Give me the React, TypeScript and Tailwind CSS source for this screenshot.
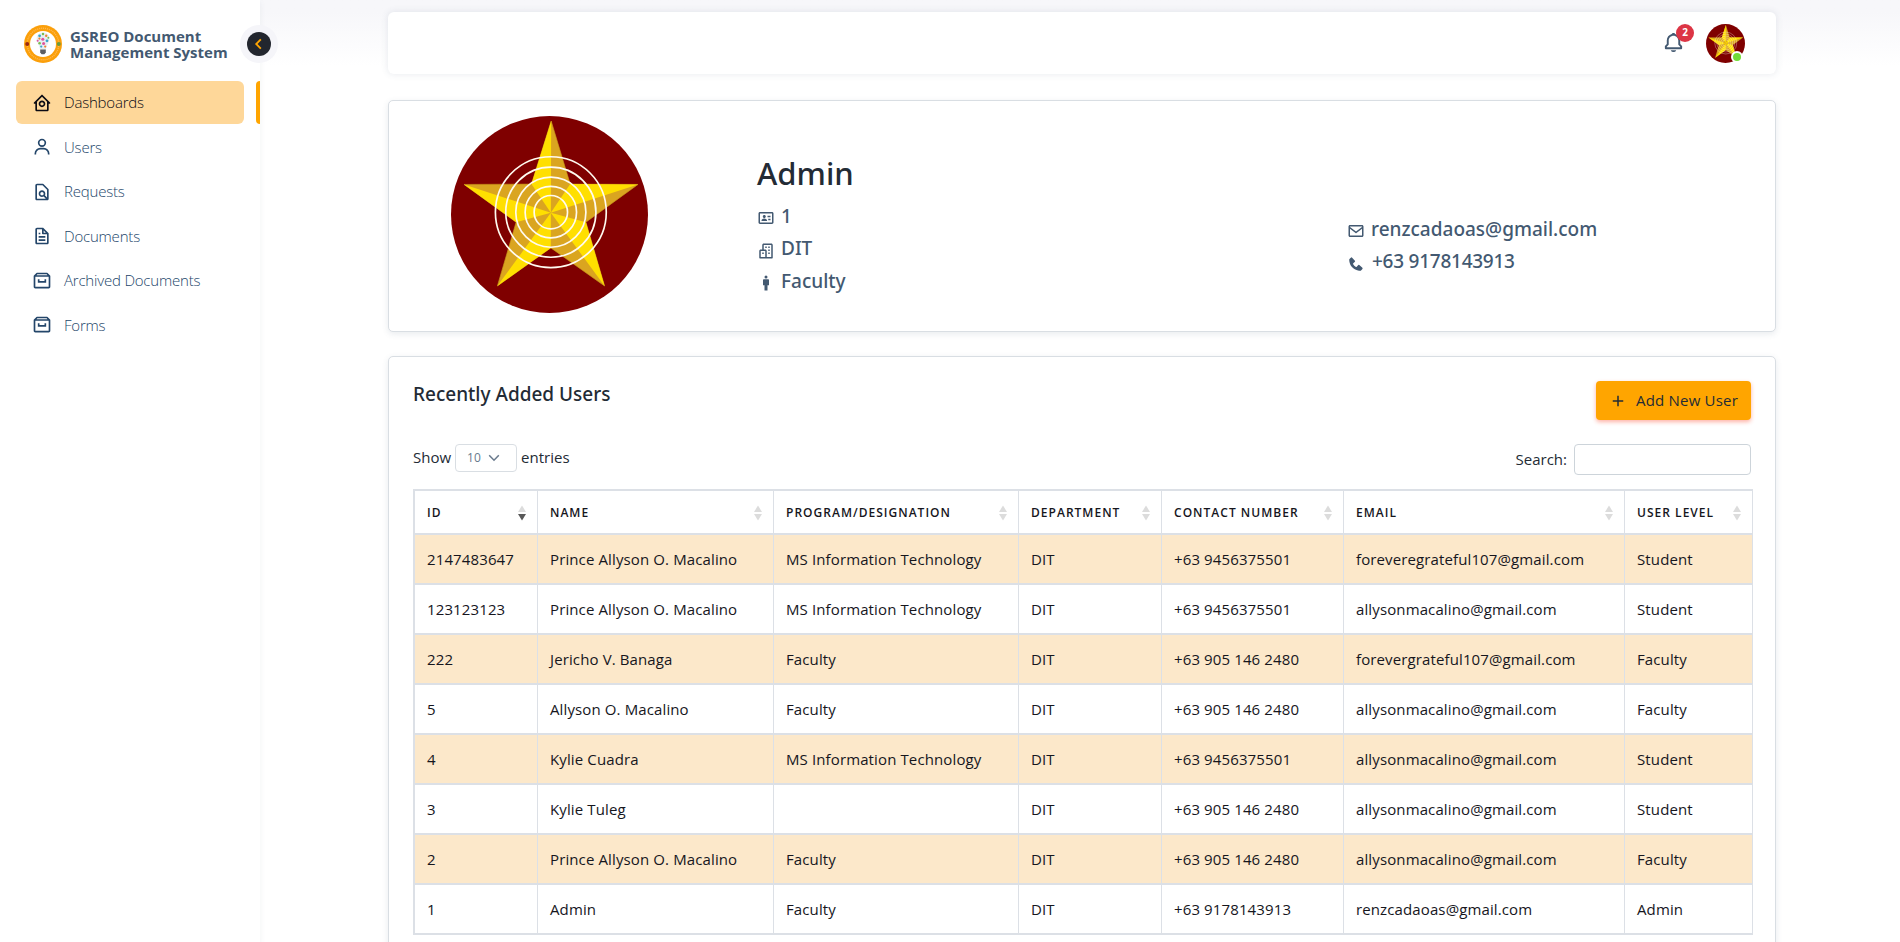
import {
  BiArchive,
  BiBell,
  BiBuildings,
  BiChevronLeft,
  BiEnvelope,
  BiFile,
  BiFileFind,
  BiHomeCircle,
  BiIdCard,
  BiMale,
  BiPlus,
  BiSolidPhone,
  BiUser,
} from 'react-icons/bi';
import type { IconType } from 'react-icons';

const menu: { label: string; icon: IconType; active?: boolean }[] = [
  { label: 'Dashboards', icon: BiHomeCircle, active: true },
  { label: 'Users', icon: BiUser },
  { label: 'Requests', icon: BiFileFind },
  { label: 'Documents', icon: BiFile },
  { label: 'Archived Documents', icon: BiArchive },
  { label: 'Forms', icon: BiArchive },
];

const columns = [
  { label: 'ID', width: 'w-[123px]' },
  { label: 'Name', width: 'w-[236px]' },
  { label: 'Program/Designation', width: 'w-[245px]' },
  { label: 'Department', width: 'w-[143px]' },
  { label: 'Contact Number', width: 'w-[182px]' },
  { label: 'Email', width: 'w-[281px]' },
  { label: 'User Level', width: 'w-[128px]' },
];

const users = [
  ['2147483647', 'Prince Allyson O. Macalino', 'MS Information Technology', 'DIT', '+63 9456375501', 'foreveregrateful107@gmail.com', 'Student'],
  ['123123123', 'Prince Allyson O. Macalino', 'MS Information Technology', 'DIT', '+63 9456375501', 'allysonmacalino@gmail.com', 'Student'],
  ['222', 'Jericho V. Banaga', 'Faculty', 'DIT', '+63 905 146 2480', 'forevergrateful107@gmail.com', 'Faculty'],
  ['5', 'Allyson O. Macalino', 'Faculty', 'DIT', '+63 905 146 2480', 'allysonmacalino@gmail.com', 'Faculty'],
  ['4', 'Kylie Cuadra', 'MS Information Technology', 'DIT', '+63 9456375501', 'allysonmacalino@gmail.com', 'Student'],
  ['3', 'Kylie Tuleg', '', 'DIT', '+63 905 146 2480', 'allysonmacalino@gmail.com', 'Student'],
  ['2', 'Prince Allyson O. Macalino', 'Faculty', 'DIT', '+63 905 146 2480', 'allysonmacalino@gmail.com', 'Faculty'],
  ['1', 'Admin', 'Faculty', 'DIT', '+63 9178143913', 'renzcadaoas@gmail.com', 'Admin'],
];

function StarEmblem({ className }: { className: string }) {
  return (
    <svg viewBox="64 48 590 590" className={className}>
      <circle cx="359" cy="343" r="295" fill="#7f0000" />
      <polygon
        points="364,63 421,252 624,253 468,366 524,557 363,443 203,557 259,366 103,253 305,252"
        fill="#daa520"
        stroke="#c9971a"
        strokeWidth="2"
      />
      <g fill="#ffdf00">
        <polygon points="363,338 305,252 364,63" />
        <polygon points="363,338 421,252 624,253" />
        <polygon points="363,338 468,366 524,557" />
        <polygon points="363,338 363,443 203,557" />
        <polygon points="363,338 259,366 103,253" />
      </g>
      <g fill="none" stroke="#fffaf0" strokeWidth="5">
        <circle cx="363" cy="336" r="50" />
        <circle cx="363" cy="336" r="77" />
        <circle cx="363" cy="336" r="105" />
        <circle cx="363" cy="336" r="135" />
        <circle cx="363" cy="336" r="166" />
      </g>
    </svg>
  );
}

function BulbLogo() {
  return (
    <svg viewBox="0 0 38 38" className="size-[38px] shrink-0">
      <circle cx="19" cy="19" r="19" fill="#fb9f0a" />
      <circle cx="19" cy="19" r="15.8" fill="none" stroke="#fdb850" strokeWidth="1.4" strokeDasharray="1.1 0.9" />
      <circle cx="19" cy="19" r="13" fill="#ffffff" />
      <circle cx="3.2" cy="19" r="2" fill="#9b2a12" />
      <circle cx="34.8" cy="19" r="2" fill="#6b9a3d" />
      <path d="M19 7.6c-4 0-6.4 2.9-6.4 6.4 0 3.4 2.8 6 3.4 10.4h6c.6-4.4 3.4-7 3.4-10.4 0-3.5-2.4-6.4-6.4-6.4z" fill="#e6eff4" />
      <g fill="#3aa6c9">
        <circle cx="15.6" cy="10.8" r="1.4" />
        <circle cx="23" cy="15.8" r="1.4" />
        <circle cx="17.2" cy="21.6" r="1.1" />
      </g>
      <g fill="#e0559b">
        <circle cx="18.8" cy="14.2" r="1.5" />
        <circle cx="19.6" cy="18.6" r="1.5" />
        <circle cx="13.6" cy="15.8" r="1" />
      </g>
      <g fill="#7bbd4a">
        <circle cx="19" cy="9" r="1.2" />
        <circle cx="15.6" cy="18.2" r="1.3" />
        <circle cx="24.4" cy="12.8" r="1" />
      </g>
      <g fill="#f08030">
        <circle cx="22.2" cy="10.8" r="1.2" />
        <circle cx="15.4" cy="13.6" r="1.1" />
        <circle cx="21.2" cy="21.6" r="1.1" />
      </g>
      <path d="M16.2 24.6h5.6v3l-1.4 1.6h-2.8l-1.4-1.6z" fill="#5c5d61" />
    </svg>
  );
}

function SortArrows({ descending }: { descending: boolean }) {
  return (
    <svg viewBox="0 0 8 16" className="h-4 w-2">
      <polygon points="4,0.5 8,7 0,7" fill="#dcdcdc" />
      <polygon points="0,9 8,9 4,15.5" fill={descending ? '#585858' : '#dcdcdc'} />
    </svg>
  );
}

function Sidebar() {
  return (
    <aside className="relative z-10 h-[942px] w-[260px] shrink-0 bg-white shadow-[0_2px_6px_rgba(67,89,113,0.08)]">
      <div className="flex h-[81px] items-start pt-[25px] pl-6">
        <BulbLogo />
        <p className="ml-2 pt-[2.5px] text-[15px] leading-4 font-bold whitespace-nowrap text-[#435971]">
          GSREO Document
          <br />
          Management System
        </p>
      </div>
      <button className="absolute top-[25px] left-60 flex size-[38px] items-center justify-center rounded-full bg-[#f5f5f9]">
        <span className="flex size-6 items-center justify-center rounded-full bg-[#22262e] text-[#ffa500]">
          <BiChevronLeft className="size-[22px]" />
        </span>
      </button>
      <nav className="flex flex-col gap-[1.5px]">
        {menu.map(({ label, icon: Icon, active }) => (
          <div key={label} className="flex h-[43px] justify-between pl-4">
            <a
              className={
                active
                  ? 'flex w-[228px] items-center rounded-md bg-[#fed799] pl-4 text-[15px] tracking-[-0.2px] text-[#0b0b14]'
                  : 'flex w-[228px] items-center rounded-md pl-4 text-[15px] tracking-[-0.2px] text-[#24466a]'
              }
            >
              <Icon className="size-5" />
              <span className="ml-3 font-light">{label}</span>
            </a>
            {active && <span className="w-1 rounded-l bg-[#ffa500]" />}
          </div>
        ))}
      </nav>
    </aside>
  );
}

function Navbar() {
  return (
    <header className="flex h-[62px] items-center justify-end rounded-md bg-white pr-[31px] shadow-[0_0_6px_1px_rgba(67,89,113,0.1)]">
      <div className="relative mr-[21px] mb-[2px] text-[#435971]">
        <BiBell className="size-[23px]" />
        <span className="absolute -top-[7px] left-[14px] flex size-[18px] items-center justify-center rounded-full bg-[#dc3545] text-[10px] font-bold text-white">
          2
        </span>
      </div>
      <div className="relative">
        <StarEmblem className="size-[39px]" />
        <span className="absolute right-[2px] bottom-0 size-3 rounded-full border-2 border-white bg-[#71dd37]" />
      </div>
    </header>
  );
}

function ProfileCard() {
  return (
    <section className="mt-[26px] flex h-[232px] rounded-[5px] border border-[#d9dee3] bg-white font-['Noto_Sans',sans-serif] font-medium text-[#435971] shadow-[0_2px_6px_rgba(67,89,113,0.12)]">
      <StarEmblem className="mt-[15px] ml-[62px] size-[197px]" />
      <div className="ml-[109px] pt-[49px]">
        <h1 className="text-[31px] leading-[46px] text-[#232b35]">Admin</h1>
        <ul className="mt-[4px] text-[19px] leading-[32.4px]">
          <li className="flex items-center gap-[6px]">
            <BiIdCard className="mt-1 size-[18px]" />1
          </li>
          <li className="flex items-center gap-[6px]">
            <BiBuildings className="mt-1 size-[18px]" />DIT
          </li>
          <li className="flex items-center gap-[6px]">
            <BiMale className="mt-1 size-[18px]" />Faculty
          </li>
        </ul>
      </div>
      <ul className="ml-auto w-[428px] pt-[112px] text-[19px] leading-[32.4px]">
        <li className="flex items-center gap-[6px]">
          <BiEnvelope className="mt-1 size-[18px]" />renzcadaoas@gmail.com
        </li>
        <li className="flex items-center gap-[7px] tracking-[-0.25px]">
          <BiSolidPhone className="mt-1 size-[18px]" />+63 9178143913
        </li>
      </ul>
    </section>
  );
}

function UsersTable() {
  return (
    <table className="mt-[13px] w-[1340px] table-fixed border-separate border-spacing-0 border-t-2 border-l-2 border-[#dce0e6] text-left text-[#16161d]">
      <thead>
        <tr className="h-11">
          {columns.map(({ label, width }, i) => (
            <th
              key={label}
              className={`${width} border-r border-b-2 border-[#dce0e6] pt-[2px] pr-[11px] pl-[12px] text-xs font-semibold tracking-[1.02px] uppercase`}
            >
              <div className="flex items-center justify-between">
                {label}
                <SortArrows descending={i === 0} />
              </div>
            </th>
          ))}
        </tr>
      </thead>
      <tbody className="text-[15px] tracking-[0.12px]">
        {users.map((row) => (
          <tr key={row[0]} className="h-[50px] odd:bg-[#fce8ca]">
            {row.map((cell, i) => (
              <td key={i} className="border-r border-b-2 border-[#dce0e6] pl-[12px] whitespace-nowrap">
                {cell}
              </td>
            ))}
          </tr>
        ))}
      </tbody>
    </table>
  );
}

function UsersCard() {
  return (
    <section className="mt-6 h-[640px] rounded-[5px] border border-[#d9dee3] bg-white px-6 pt-6 shadow-[0_2px_6px_rgba(67,89,113,0.12)]">
      <div className="flex items-start justify-between">
        <h2 className="font-['Noto_Sans',sans-serif] text-[19px] leading-[26px] font-medium text-[#232b35]">
          Recently Added Users
        </h2>
        <button className="flex h-[39px] w-[155px] items-center rounded bg-[#ffa500] pl-[13px] text-[15px] tracking-[0.2px] text-[#232b35] shadow-[0_2px_4px_rgba(255,62,29,0.4)]">
          <BiPlus className="mr-[9px] size-[18px]" />
          Add New User
        </button>
      </div>
      <div className="mt-6 flex h-8 items-start justify-between text-[15px] text-[#232b35]">
        <label className="flex h-7 items-center">
          <span className="pb-[2px]">Show</span>
          <span className="mx-1 flex h-7 w-[62px] items-center rounded border border-[#d9dee3] pl-[11px] text-xs text-[#697a8d]">
            10
            <svg viewBox="0 0 12 8" className="ml-[7px] h-2 w-3">
              <path d="M1.2 1.2 6 6.2l4.8-5" fill="none" stroke="#697a8d" strokeWidth="1.5" />
            </svg>
          </span>
          <span className="pb-[2px]">entries</span>
        </label>
        <label className="flex items-center gap-[7px]">
          Search:
          <input className="h-[31px] w-[177px] rounded border border-[#cdd4da]" />
        </label>
      </div>
      <UsersTable />
    </section>
  );
}

export default function App() {
  return (
    <div className="flex h-[942px] w-full overflow-hidden bg-white font-['Open_Sans',sans-serif]">
      <Sidebar />
      <div className="flex-1 bg-linear-to-b from-[#f7f7fa] from-[12px] to-white to-[66px]">
        <main className="ml-32 w-[1388px] pt-3">
          <Navbar />
          <ProfileCard />
          <UsersCard />
        </main>
      </div>
    </div>
  );
}
